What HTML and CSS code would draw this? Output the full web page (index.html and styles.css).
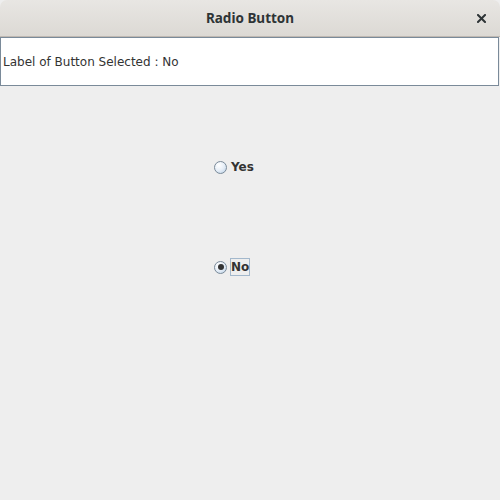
FILE: index.html
```html
<!DOCTYPE html>
<html>
<head>
<meta charset="utf-8">
<link rel="stylesheet" href="styles.css">
</head>
<body>
<div class="window">
  <div class="titlebar">
    <span class="title">Radio Button</span>
    <span class="close">
      <svg width="9" height="9" viewBox="0 0 9 9"><path d="M1 1 L8 8 M8 1 L1 8" stroke="#2e3436" stroke-width="2" stroke-linecap="square"/></svg>
    </span>
  </div>
  <div class="field">Label of Button Selected : No</div>
  <div class="content">
    <div class="radio r-yes">
      <span class="dot"></span>
      <span class="lbl">Yes</span>
    </div>
    <div class="radio r-no">
      <span class="dot checked"></span>
      <span class="lbl focus">No</span>
    </div>
  </div>
</div>
</body>
</html>
```
FILE: styles.css
```css
html, body {
  margin: 0;
  padding: 0;
  width: 500px;
  height: 500px;
  overflow: hidden;
  background: #eeeeee;
}
.window {
  width: 500px;
  height: 500px;
  display: flex;
  flex-direction: column;
  background: #eeeeee;
}
.titlebar {
  height: 36px;
  flex: none;
  background: linear-gradient(#e8e6e3, #dcd9d4);
  border-bottom: 1px solid #bfb8b1;
  border-radius: 7px 7px 0 0;
  display: flex;
  align-items: center;
  justify-content: center;
  position: relative;
}
.title {
  font-family: "Noto Sans", "DejaVu Sans", sans-serif;
  font-weight: bold;
  font-size: 13.5px;
  color: #2e3436;
}
.close {
  position: absolute;
  right: 14px;
  top: 14px;
  width: 9px;
  height: 9px;
  display: flex;
}
.field {
  flex: none;
  height: 46px;
  margin-right: 1px;
  border: 1px solid #7a8a99;
  background: #ffffff;
  font-family: "DejaVu Sans", sans-serif;
  font-size: 12px;
  color: #333333;
  display: flex;
  align-items: center;
  padding-left: 2px;
  padding-top: 1px;
  box-sizing: content-box;
}
.content {
  flex: 1;
  display: flex;
  flex-direction: column;
  padding-left: 214px;
  padding-top: 72px;
  gap: 82px;
}
.radio {
  display: flex;
  align-items: center;
  height: 18px;
  gap: 3px;
}
.dot {
  width: 11px;
  height: 11px;
  border-radius: 50%;
  border: 1px solid #7a8a99;
  background: radial-gradient(circle at 35% 30%, #ffffff 0%, #e6eef7 50%, #b8cfe5 100%);
  position: relative;
  flex: none;
}
.dot.checked::after {
  content: "";
  position: absolute;
  left: 2.5px;
  top: 2.5px;
  width: 6px;
  height: 6px;
  border-radius: 50%;
  background: #333333;
}
.lbl {
  font-family: "DejaVu Sans", sans-serif;
  font-weight: bold;
  font-size: 12px;
  color: #333333;
  padding: 1px 0 1px 0;
  border: 1px solid transparent;
}
.lbl.focus {
  border-color: #a3b8cc;
}
```
